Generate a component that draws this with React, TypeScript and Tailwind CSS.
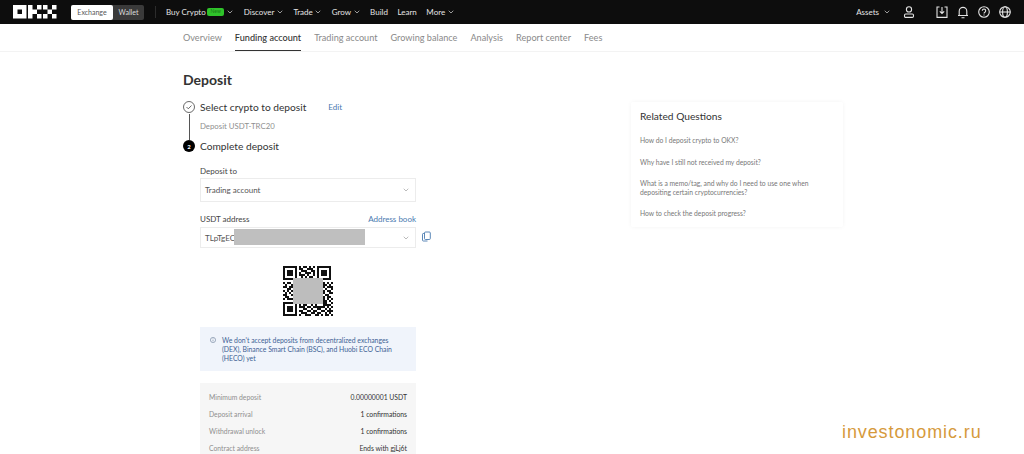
import React from "react";
import { ChevronDown } from "lucide-react";

const seed = [
  "1111111010110101011111110","1000001011001110010000010","1011101001110011010111010","1011101010011101010111010","1011101011101001010111010","1000001001010110010000010","1111111010101010111111110","0000000011010011000000000",
  "1011011100111010110110101","0100100111001101001011010","1101101001110010110010111","0011010110100111011101001","1010111001011010100110110","0101000110101101011010011","1100111010010110101101100","0110010101101011010010110","1011101100110101111110101","0000000011001010100011010","1111111001011101101011001","1000001010110010100011110","1011101011101101111110101","1011101000110010011001010","1011101011001101100110111","1000001001110011011001010","1111111010011100110101101",
];

function QR() {
  return (
    <svg width="50" height="50" viewBox="0 0 25 25" shapeRendering="crispEdges">
      {seed.flatMap((r, y) => r.split("").map((c, x) => (c === "1" ? <rect key={`${x}-${y}`} x={x} y={y} width="1" height="1" fill="#111" /> : null)))}
    </svg>
  );
}

function Logo() {
  return (
    <svg width="44" height="14" viewBox="0 0 44 14" fill="#fff">
      <path fillRule="evenodd" d="M0 0h13.5v13.5H0zM4.5 4.500v4.500h4.500V4.500z" />
      <path d="M15 0h4.500v13.500H15zM19.500 4.500H24v4.500h-4.500zM24 0h4.500v4.500H24zM24 9h4.500v4.500H24z" />
      <path d="M30 0h4.500v4.500H30zM39 0h4.500v4.500H39zM34.500 4.500H39v4.500h-4.500zM30 9h4.500v4.500H30zM39 9h4.500v4.500H39z" />
    </svg>
  );
}

const Nav = ({ label, chev = true }: { label: string; chev?: boolean }) => (
  <span className="flex items-center gap-[1.5px] text-[8px] text-[#e4e4e4]">
    {label}
    {chev && <ChevronDown size={8} strokeWidth={2} />}
  </span>
);

const Row = ({ k, v }: { k: string; v: string }) => (
  <div className="flex h-[17.3px] items-center justify-between">
    <span className="text-[#8f8f8f]">{k}</span>
    <span className="text-[#333]">{v}</span>
  </div>
);

export default function App() {
  return (
    <div className="relative h-[454px] w-[1024px] overflow-hidden bg-white font-['Lato',sans-serif] text-[#222]">
      <header className="flex h-[24px] items-center bg-[#0d0d0d] pl-[13px] pr-[13px]">
        <Logo />
        <div className="ml-[14px] flex h-[15px] w-[73px] rounded-[2px] bg-[#3a3a3a] text-[7px]">
          <span className="flex w-[42px] items-center justify-center rounded-[2px] bg-white text-[#555]">Exchange</span>
          <span className="flex flex-1 items-center justify-center text-[#ddd]">Wallet</span>
        </div>
        <div className="ml-[11px] h-[12px] w-px bg-[#2c2c2c]" />
        <div className="ml-[10px] flex items-center gap-[9.500px]">
          <span className="mr-[0.500px] flex items-center gap-[1.5px] text-[8px] text-[#e4e4e4]">
            Buy Crypto
            <span className="flex h-[8px] w-[17px] items-center justify-center rounded-[2px] bg-[#2fc32a] text-[5px] text-[#1a7a16]">New</span>
            <ChevronDown size={8} strokeWidth={2} />
          </span>
          <Nav label="Discover" />
          <Nav label="Trade" />
          <Nav label="Grow" />
          <Nav label="Build" chev={false} />
          <Nav label="Learn" chev={false} />
          <Nav label="More" />
        </div>
        <div className="ml-auto flex items-center text-[#e4e4e4]">
          <span className="flex items-center gap-[3px] text-[8px]">Assets <ChevronDown size={8} className="ml-[1px]" /></span>
          <svg className="ml-[12px]" width="12" height="12" viewBox="0 0 12 12" fill="none" stroke="currentColor" strokeWidth="1.1"><circle cx="6" cy="3.4" r="2.6" /><rect x="1.5" y="8" width="9" height="3.4" rx="1.2" /></svg>
          <svg className="ml-[21px]" width="12" height="12" viewBox="0 0 12 12" fill="none" stroke="currentColor" strokeWidth="1.1"><path d="M3.500 1H1v10.400h10V1H8.500M6 1v6.500M3.800 5.300 6 7.500l2.200-2.200" /></svg>
          <svg className="ml-[9px]" width="12" height="13" viewBox="0 0 12 13" fill="none" stroke="currentColor" strokeWidth="1.1"><path d="M2.200 9.500V5.200a3.800 3.800 0 0 1 7.600 0v4.300zM1 9.500h10M4.500 11.800h3" /></svg>
          <svg className="ml-[9px]" width="12" height="12" viewBox="0 0 12 12" fill="none" stroke="currentColor" strokeWidth="1.1"><circle cx="6" cy="6" r="5.300" /><path d="M4.300 4.700a1.700 1.700 0 1 1 2.600 1.500c-.6.4-.9.700-.9 1.300M6 8.400v1" /></svg>
          <svg className="ml-[9px]" width="12" height="12" viewBox="0 0 12 12" fill="none" stroke="currentColor" strokeWidth="1.1"><circle cx="6" cy="6" r="5.300" /><ellipse cx="6" cy="6" rx="2.400" ry="5.300" /><path d="M.7 6h10.600" /></svg>
        </div>
      </header>

      <nav className="flex h-[28px] items-start gap-[13px] border-b border-[#f3f3f3] pl-[183px] text-[9.150px] text-[#8a8a8a]">
        <span className="pt-[7px]">Overview</span>
        <span className="h-[27px] border-b border-[#333] pt-[7px] font-medium text-[#333]">Funding account</span>
        <span className="pt-[7px]">Trading account</span>
        <span className="pt-[7px]">Growing balance</span>
        <span className="pt-[7px]">Analysis</span>
        <span className="pt-[7px]">Report center</span>
        <span className="pt-[7px]">Fees</span>
      </nav>

      <main className="flex pl-[183px]">
        <section className="w-[233px] shrink-0">
          <h1 className="mt-[19px] text-[14px] leading-[18px] font-bold text-[#333]">Deposit</h1>
          <div className="mt-[11px] flex items-center">
            <svg width="12" height="12" viewBox="0 0 12 12" fill="none" stroke="#444" strokeWidth=".8"><circle cx="6" cy="6" r="5.500" /><path d="m3.500 6 1.800 1.800 3.200-3.300" /></svg>
            <span className="ml-[5px] text-[10.200px] leading-[14px] text-[#333]">Select crypto to deposit</span>
            <span className="ml-[22px] text-[8px] text-[#4a7ab0]">Edit</span>
          </div>
          <div className="relative flex h-[26px] items-center pl-[17px] text-[7.800px] text-[#8f8f8f]">
            <div className="absolute top-0 left-[5.500px] h-full w-px bg-[#555]" />
            Deposit USDT-TRC20
          </div>
          <div className="flex items-center">
            <span className="flex size-[12px] items-center justify-center rounded-full bg-black text-[6px] font-bold text-white">2</span>
            <span className="ml-[5px] text-[10.200px] leading-[12px] text-[#333]">Complete deposit</span>
          </div>

          <div className="ml-[17px] w-[216px]">
            <div className="mt-[13px] text-[8px] leading-[12px] text-[#444]">Deposit to</div>
            <div className="mt-[1px] flex h-[24px] items-center justify-between border border-[#ececec] px-[4px] text-[8px] text-[#555]">
              Trading account
              <ChevronDown size={8} className="mr-[1px] text-[#999]" />
            </div>
            <div className="mt-[11px] flex justify-between text-[8px] leading-[12px] text-[#444]">
              USDT address
              <span className="text-[#4a7ab0]">Address book</span>
            </div>
            <div className="relative mt-[2px] flex h-[21px] items-center justify-between border border-[#ececec] px-[4px] text-[8px] text-[#555]">
              TLpTgEC
              <ChevronDown size={8} className="mr-[1px] text-[#999]" />
              <div className="absolute top-[1px] left-[33px] h-[16px] w-[131px] bg-[#bfbfbf]" />
              <svg className="absolute top-[3px] -right-[16px]" width="9" height="11" viewBox="0 0 9 11" fill="none" stroke="#4a7ab0" strokeWidth=".9"><rect x="2.500" y="1" width="5.800" height="7.500" rx="1" /><path d="M2.500 2.500H1.200a.8.8 0 0 0-.7.8v5.900c0 .5.300.8.8.8h4.200" /></svg>
            </div>
            <div className="relative mx-auto mt-[18px] size-[50px]">
              <QR />
              <div className="absolute top-[12px] left-[10px] h-[26px] w-[30px] bg-[#bdbdbd]" />
            </div>
            <div className="mt-[11px] flex h-[44px] gap-[6px] bg-[#f0f4fb] px-[10px] pt-[9px] text-[6.850px] leading-[9px] text-[#3d5f94]">
              <svg className="mt-[1px] shrink-0" width="6" height="6" viewBox="0 0 6 6" fill="none" stroke="#6c7f99" strokeWidth=".6"><circle cx="3" cy="3" r="2.600" /><path d="M3 2.600v1.800M3 1.400v.6" /></svg>
              <p>We don't accept deposits from decentralized exchanges (DEX), Binance Smart Chain (BSC), and Huobi ECO Chain (HECO) yet</p>
            </div>
            <div className="mt-[12px] h-[80px] bg-[#f6f6f6] px-[9px] pt-[5px] text-[6.800px]">
              <Row k="Minimum deposit" v="0.00000001 USDT" />
              <Row k="Deposit arrival" v="1 confirmations" />
              <Row k="Withdrawal unlock" v="1 confirmations" />
              <Row k="Contract address" v="Ends with gjLj6t" />
            </div>
          </div>
        </section>

        <aside className="mt-[50px] ml-[215px] h-[125px] w-[212px] rounded-[2px] px-[9px] pt-[7px] shadow-[0_0_4px_rgba(0,0,0,0.05)]">
          <h2 className="text-[10.200px] leading-[14px] text-[#333]">Related Questions</h2>
          <ul className="mt-[13px] text-[6.750px] leading-[8.500px] text-[#777]">
            <li>How do I deposit crypto to OKX?</li>
            <li className="mt-[13px]">Why have I still not received my deposit?</li>
            <li className="mt-[13px]">What is a memo/tag, and why do I need to use one when depositing certain cryptocurrencies?</li>
            <li className="mt-[13px]">How to check the deposit progress?</li>
          </ul>
        </aside>
      </main>

      <div className="absolute top-[421px] left-[842px] font-['Liberation_Sans',sans-serif] text-[18px] leading-[22px] tracking-[0.9px] text-[#d69a3c]">investonomic.ru</div>
    </div>
  );
}
